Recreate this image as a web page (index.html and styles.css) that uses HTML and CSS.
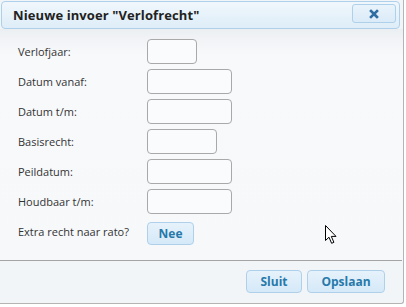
FILE: index.html
```html
<!DOCTYPE html>
<html lang="nl">
<head>
  <meta charset="UTF-8" />
  <title>Nieuwe invoer Verlofrecht</title>
  <link rel="stylesheet" href="styles.css">
</head>
<body>
  <div class="dialog">
    <div class="titlebar">
      <span class="title">Nieuwe invoer "Verlofrecht"</span>
      <button class="close-btn" aria-label="Sluiten">
        <svg width="10" height="10" viewBox="0 0 10 10">
          <path d="M2 2 L8 8 M8 2 L2 8" stroke="#2e6ea3" stroke-width="2.6" stroke-linecap="square" />
        </svg>
      </button>
    </div>

    <div class="content">
      <div class="form">
        <label>Verlofjaar:</label>
        <input type="text" class="w-small" />

        <label>Datum vanaf:</label>
        <input type="text" class="w-date" />

        <label>Datum t/m:</label>
        <input type="text" class="w-date" />

        <label>Basisrecht:</label>
        <input type="text" class="w-mid" />

        <label>Peildatum:</label>
        <input type="text" class="w-date" />

        <label>Houdbaar t/m:</label>
        <input type="text" class="w-date" />

        <label>Extra recht naar rato?</label>
        <div><button class="btn btn-toggle">Nee</button></div>
      </div>
    </div>

    <div class="buttonpane">
      <button class="btn btn-sluit">Sluit</button>
      <button class="btn btn-opslaan">Opslaan</button>
    </div>
  </div>

  <!-- mouse pointer, lies over the dialog -->
  <svg class="cursor" width="13" height="20" viewBox="0 0 13 20">
    <path d="M0.5 0.5 L0.5 15.5 L4 12.2 L6.6 18.3 L8.9 17.3 L6.3 11.4 L11 11.4 Z" fill="#fff" stroke="#000" stroke-width="1" stroke-linejoin="miter" />
  </svg>
</body>
</html>
```

FILE: styles.css
```css
body {
  margin: 0;
  background: #ffffff;
  font-family: "Open Sans", Arial, sans-serif;
}

.dialog {
  position: relative;
  width: 403px;
  height: 303px;
  border-right: 1px solid #b4b4b4;
  border-bottom: 1px solid #b4b4b4;
  border-bottom-right-radius: 3px;
  background: #f2f5f8;
  display: flex;
  flex-direction: column;
}

.titlebar {
  margin: 1px 3px 0 1px;
  height: 26px;
  border: 1px solid #aed0ea;
  border-radius: 4px;
  background: linear-gradient(to bottom, #f0f7fc 0%, #deedf8 100%);
  display: flex;
  align-items: center;
  justify-content: space-between;
  padding: 0 3px 0 11px;
}

.title {
  font-weight: bold;
  font-size: 13px;
  color: #222;
  letter-spacing: 0.1px;
}

.close-btn {
  width: 44px;
  height: 19px;
  margin-top: -3px;
  border: 1px solid #aed0ea;
  border-radius: 3px;
  background: linear-gradient(to bottom, #e9f3fb 0%, #dbebf8 100%);
  display: flex;
  align-items: center;
  justify-content: center;
  padding: 0;
}

.content {
  flex: 1;
  background: linear-gradient(to bottom, #eceff2 0px, #f8f9fb 26px, #f6f8fa 100%);
  padding: 10px 0 0 18px;
}

.form {
  display: grid;
  grid-template-columns: 129px auto;
  grid-auto-rows: 25px;
  row-gap: 5px;
  align-items: center;
}

.form label {
  font-size: 11px;
  color: #333;
}

.form input {
  box-sizing: border-box;
  height: 25px;
  border: 1px solid #a9a9a9;
  border-radius: 4px;
  background: #fafbfc;
  padding: 0 4px;
}

.w-small { width: 50px; }
.w-mid { width: 70px; }
.w-date { width: 85px; }

.btn {
  box-sizing: border-box;
  height: 23px;
  border: 1px solid #aed0ea;
  border-radius: 4px;
  background: linear-gradient(to bottom, #e6f2fb 0%, #d5e9f8 100%);
  color: #2779aa;
  font-family: "Open Sans", Arial, sans-serif;
  font-weight: bold;
  font-size: 12px;
  padding: 0;
}

.btn-toggle {
  width: 47px;
  margin-top: 3px;
}

.buttonpane {
  border-top: 1px solid #a4a4a4;
  margin-right: 1px;
  height: 43px;
  display: flex;
  justify-content: flex-end;
  align-items: flex-start;
  gap: 5px;
  padding: 9px 17px 0 0;
  box-sizing: border-box;
}

.btn-sluit { width: 56px; }
.btn-opslaan { width: 78px; }

.cursor {
  position: absolute;
  left: 325px;
  top: 225px;
}
```
